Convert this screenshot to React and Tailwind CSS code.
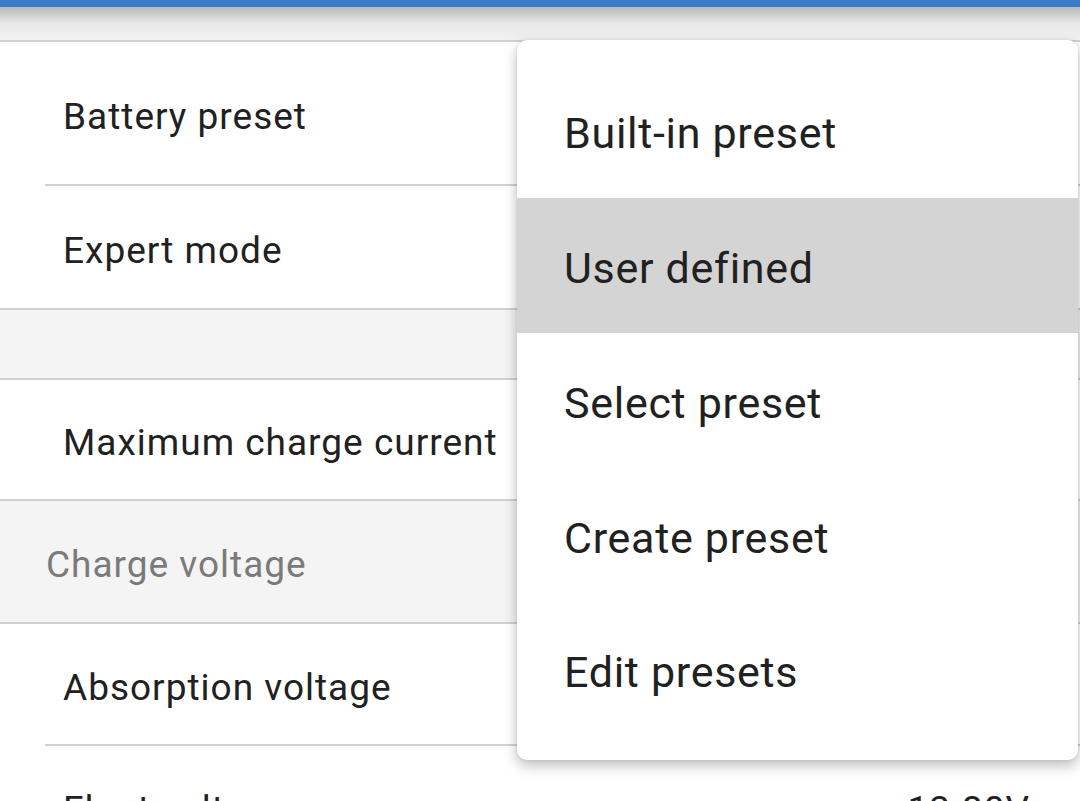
const rows = [
  { type: 'item', label: 'Battery preset', h: 'h-[142px]', divider: 'inset' },
  { type: 'item', label: 'Expert mode', h: 'h-[122px]', divider: 'full' },
  { type: 'gap', h: 'h-[68px]', divider: 'full' },
  { type: 'item', label: 'Maximum charge current', h: 'h-[119px]', divider: 'full' },
  { type: 'header', label: 'Charge voltage', h: 'h-[121px]', divider: 'full' },
  { type: 'item', label: 'Absorption voltage', h: 'h-[120px]', divider: 'inset' },
  { type: 'item', label: 'Float voltage', value: '13.80V', h: 'h-[120px]', divider: 'none' }
]

const menu = ['Built-in preset', 'User defined', 'Select preset', 'Create preset', 'Edit presets']

function Row({ row }) {
  const bg = row.type === 'item' ? 'bg-white' : 'bg-[#f4f4f4]'
  return (
    <div>
      <div className={`${row.h} ${bg} flex items-center justify-between pt-[7px]`}>
        {row.type === 'item' && (
          <span className="pl-[63px] text-[37px] tracking-[1px] text-[#212121]">{row.label}</span>
        )}
        {row.type === 'header' && (
          <span className="pl-[46px] text-[37px] tracking-[1px] text-[#7a7a7a]">{row.label}</span>
        )}
        {row.value && (
          <span className="pr-[50px] text-[37px] tracking-[1px] text-[#212121]">{row.value}</span>
        )}
      </div>
      {row.divider === 'inset' && (
        <div className="bg-white pl-[45px]">
          <div className="h-[2px] bg-[#d0d0d0]" />
        </div>
      )}
      {row.divider === 'full' && <div className="h-[2px] bg-[#d0d0d0]" />}
    </div>
  )
}

export default function App() {
  return (
    <div className="relative w-[1080px] h-[801px] overflow-hidden bg-white font-['Roboto',sans-serif]">
      <div className="h-[7px] bg-[#3b7cc4]" />
      <div className="h-[33px] bg-gradient-to-b from-[#b9b9b9] via-[#e8e8e8] to-[#f2f2f2]" />
      <div className="h-[2px] bg-[#d0d0d0]" />
      {rows.map((r, i) => (
        <Row key={i} row={r} />
      ))}

      <div className="absolute left-[517px] top-[40px] right-[2px] h-[720px] bg-white rounded-[10px] shadow-[0_6px_14px_rgba(0,0,0,0.25),0_0_4px_rgba(0,0,0,0.08)] py-[23px]">
        {menu.map((m) => (
          <div
            key={m}
            className={`h-[134.8px] flex items-center pl-[47px] pt-[6px] text-[43px] tracking-[0.7px] text-[#212121] ${
              m === 'User defined' ? 'bg-[#d4d4d4]' : ''
            }`}
          >
            {m}
          </div>
        ))}
      </div>
    </div>
  )
}
